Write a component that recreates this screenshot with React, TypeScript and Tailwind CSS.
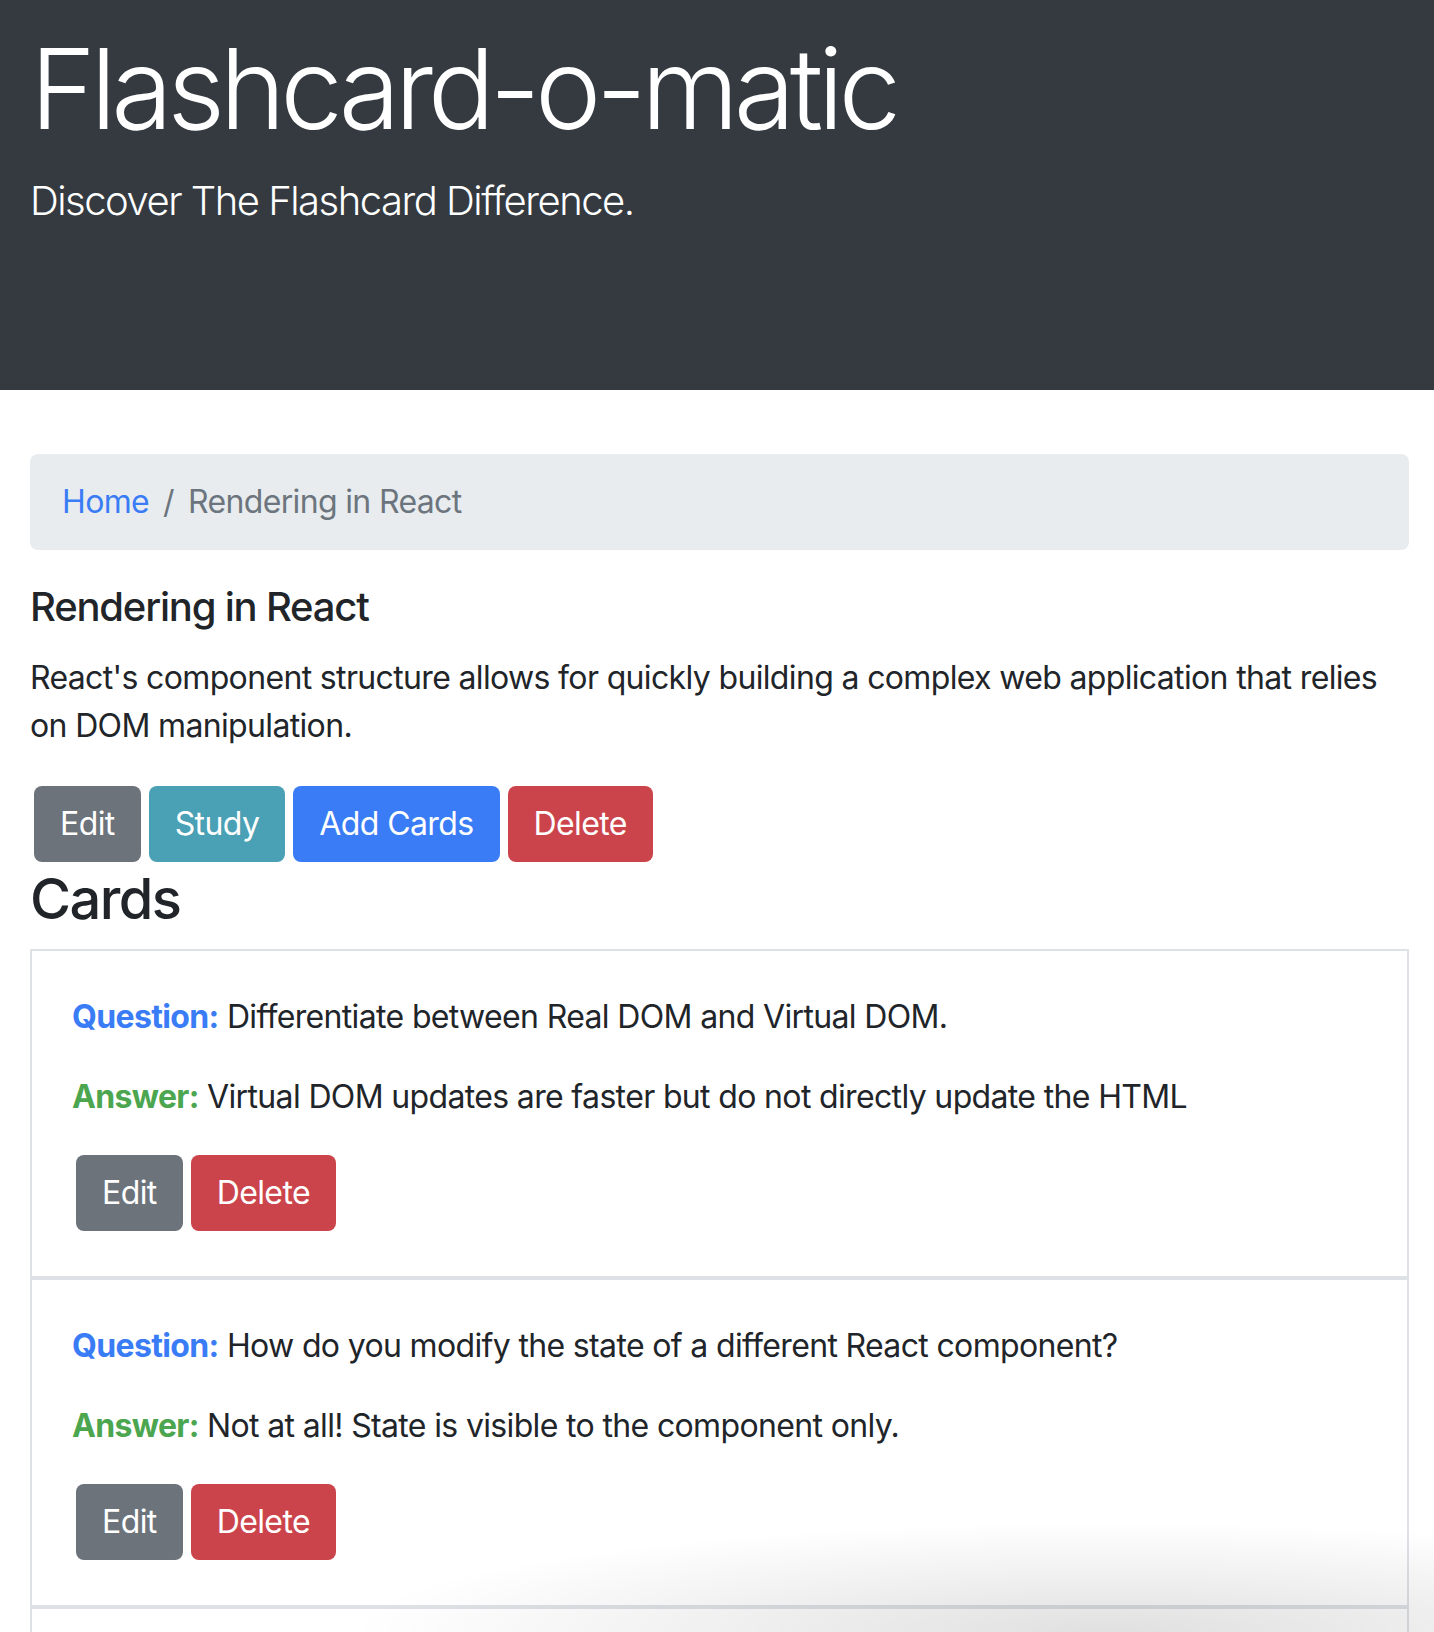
import React from "react";

type Card = { id: number; front: string; back: string };

const cards: Card[] = [
  {
    id: 1,
    front: "Differentiate between Real DOM and Virtual DOM.",
    back: "Virtual DOM updates are faster but do not directly update the HTML",
  },
  {
    id: 2,
    front: "How do you modify the state of a different React component?",
    back: "Not at all! State is visible to the component only.",
  },
];

const Btn = ({ label, color }: { label: string; color: string }) => (
  <button
    className={`${color} text-white text-[32px] leading-[48px] tracking-[-0.6px] px-[26px] py-[14px] rounded-[8px]`}
  >
    {label}
  </button>
);

const App = () => {
  return (
    <div className="relative h-[1632px] overflow-hidden bg-white text-[#212529] font-['Inter','Helvetica_Neue',Arial,sans-serif]">
      {/* Jumbotron */}
      <header className="h-[390px] bg-[#343a40] px-[30px] pt-[21px] text-white">
        <h1 className="text-[112px] font-light leading-[1.2] tracking-[-5.4px] mb-[16px]">
          Flashcard-o-matic
        </h1>
        <p className="text-[40px] font-light leading-[1.5] tracking-[-1.5px]">
          Discover The Flashcard Difference.
        </p>
      </header>

      <main className="pl-[30px] pr-[25px] pt-[64px] tracking-[-0.65px]">
        {/* Breadcrumb */}
        <nav className="flex items-center bg-[#e9ecef] rounded-[8px] px-[32px] py-[24px] text-[32px] leading-[48px] mb-[33px]">
          <a href="/" className="text-[#3a7cf6]">
            Home
          </a>
          <span className="px-[14px] text-[#6c757d]">/</span>
          <span className="text-[#6c757d]">Rendering in React</span>
        </nav>

        {/* Deck info */}
        <h5 className="text-[40px] font-medium leading-[48px] tracking-[-1.2px] mb-[23px]">
          Rendering in React
        </h5>
        <p className="text-[32px] leading-[48px] mb-[36px]">
          React's component structure allows for quickly building a complex web
          application that relies on DOM manipulation.
        </p>

        <div className="flex gap-[8px] ml-[4px] my-[4px]">
          <Btn label="Edit" color="bg-[#6c737b]" />
          <Btn label="Study" color="bg-[#4aa0b5]" />
          <Btn label="Add Cards" color="bg-[#3a7cf6]" />
          <Btn label="Delete" color="bg-[#cc444b]" />
        </div>

        <h3 className="text-[56px] font-medium leading-[1.2] tracking-[-1.6px] mb-[16px]">
          Cards
        </h3>

        {/* Card list */}
        <div className="flex flex-col">
          {cards.map((card) => (
            <div
              key={card.id}
              className="border-2 border-[#dee2e6] px-[40px] pt-[42px] pb-[41px]"
            >
              <p className="text-[32px] leading-[48px] mb-[32px]">
                <span className="font-bold text-[#3a7cf6]">Question:</span>{" "}
                {card.front}
              </p>
              <p className="text-[32px] leading-[48px] mb-[34px]">
                <span className="font-bold text-[#4ca64f]">Answer:</span>{" "}
                {card.back}
              </p>
              <div className="flex gap-[8px] m-[4px]">
                <Btn label="Edit" color="bg-[#6c737b]" />
                <Btn label="Delete" color="bg-[#cc444b]" />
              </div>
            </div>
          ))}
          <div className="border-2 border-[#dee2e6] h-[120px]"></div>
        </div>
      </main>

      {/* window shadow at the bottom edge */}
      <div className="pointer-events-none absolute left-[350px] right-0 bottom-0 h-[110px] bg-[radial-gradient(ellipse_70%_100%_at_70%_100%,rgba(0,0,0,0.12),rgba(0,0,0,0))]"></div>
    </div>
  );
};

export default App;
